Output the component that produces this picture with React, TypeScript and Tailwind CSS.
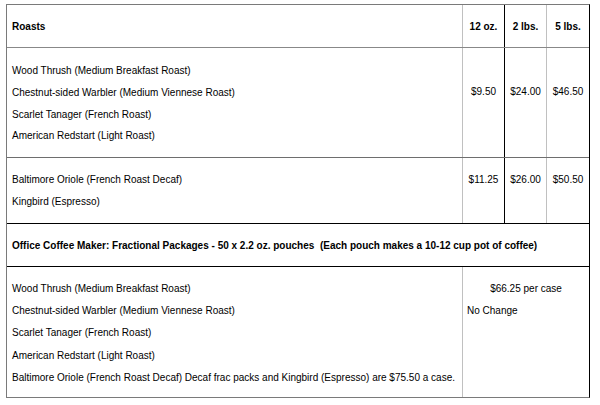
import React from "react";

const font = { fontFamily: '"Liberation Sans", Arial, sans-serif' };

export default function App() {
  const lines1 = [
    "Wood Thrush (Medium Breakfast Roast)",
    "Chestnut-sided Warbler (Medium Viennese Roast)",
    "Scarlet Tanager (French Roast)",
    "American Redstart (Light Roast)",
  ];
  return (
    <div className="w-[600px] h-[405px] bg-white pt-[4px] pl-[6px] text-[10px] text-black" style={font}>
      <div className="w-[584px] border border-t-[#7a7a7a] border-l-[#7a7a7a] border-b-[#7a7a7a] border-r-black">
        {/* Header */}
        <div className="flex h-[43px] border-b border-b-[#888888] font-bold">
          <div className="w-[456px] flex items-center pl-[5px] border-r border-r-[#c0c0c0]">Roasts</div>
          <div className="w-[42px] flex items-center justify-center border-r border-r-black">12 oz.</div>
          <div className="w-[42px] flex items-center justify-center border-r border-r-[#c0c0c0]">2 lbs.</div>
          <div className="w-[42px] flex items-center justify-center">5 lbs.</div>
        </div>
        {/* Row 1 */}
        <div className="flex h-[110px] border-b border-b-[#6e6e6e]">
          <div className="w-[456px] flex flex-col justify-center pl-[5px] pt-[2px] leading-[21.8px] border-r border-r-[#c0c0c0]">
            {lines1.map((l) => (
              <p key={l}>{l}</p>
            ))}
          </div>
          <div className="w-[42px] flex items-center justify-center pb-[22px] border-r border-r-black">$9.50</div>
          <div className="w-[42px] flex items-center justify-center pb-[22px] border-r border-r-[#c0c0c0]">$24.00</div>
          <div className="w-[42px] flex items-center justify-center pb-[22px]">$46.50</div>
        </div>
        {/* Row 2 */}
        <div className="flex h-[66px] border-b border-b-black">
          <div className="w-[456px] flex flex-col justify-center pl-[5px] leading-[21.5px] border-r border-r-[#c0c0c0]">
            <p>Baltimore Oriole (French Roast Decaf)</p>
            <p>Kingbird (Espresso)</p>
          </div>
          <div className="w-[42px] flex items-center justify-center pb-[22px] border-r border-r-black">$11.25</div>
          <div className="w-[42px] flex items-center justify-center pb-[22px] border-r border-r-[#c0c0c0]">$26.00</div>
          <div className="w-[42px] flex items-center justify-center pb-[22px]">$50.50</div>
        </div>
        {/* Office row */}
        <div className="flex h-[43px] items-center pl-[5px] font-bold border-b border-b-black">
          Office Coffee Maker: Fractional Packages - 50 x 2.2 oz. pouches{"\u00a0 "}(Each pouch makes a 10-12 cup pot of coffee)
        </div>
        {/* Row 4 */}
        <div className="flex h-[130px]">
          <div className="w-[456px] pt-[11px] pl-[5px] leading-[22.2px] border-r border-r-[#c0c0c0]">
            {lines1.map((l) => (
              <p key={l}>{l}</p>
            ))}
            <p>Baltimore Oriole (French Roast Decaf) Decaf frac packs and Kingbird (Espresso) are $75.50 a case.</p>
          </div>
          <div className="w-[126px] pt-[11px] pl-[4px] leading-[22.2px]">
            <p className="text-center pr-[4px]">$66.25 per case</p>
            <p>No Change</p>
          </div>
        </div>
      </div>
    </div>
  );
}
